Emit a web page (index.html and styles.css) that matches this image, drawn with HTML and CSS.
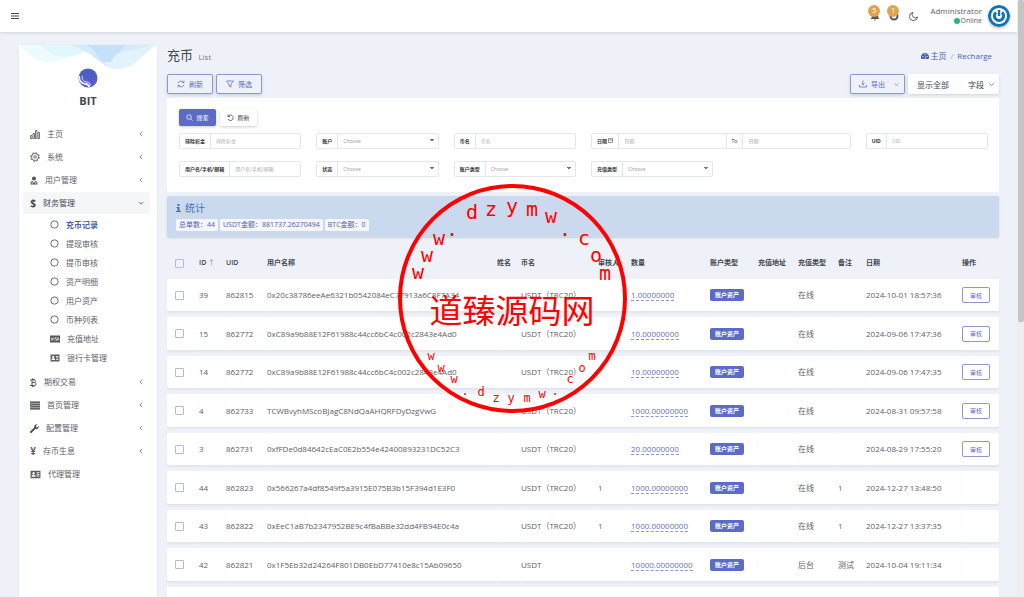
FILE: index.html
```html
<!DOCTYPE html>
<html lang="zh-CN">
<head>
  <meta charset="utf-8">
  <title>充币</title>
  <link rel="stylesheet" href="styles.css">
</head>
<body>
  <svg class="symbols" aria-hidden="true">
    <symbol id="i-circle" viewBox="0 0 16 16"><circle cx="8" cy="8" r="6.5" fill="none" stroke="currentColor" stroke-width="1.6"/></symbol>
    <symbol id="i-left" viewBox="0 0 16 16"><path d="M11 2L5 8l6 6" fill="none" stroke="currentColor" stroke-width="2"/></symbol>
    <symbol id="i-down" viewBox="0 0 16 16"><path d="M2 5l6 6 6-6" fill="none" stroke="currentColor" stroke-width="2"/></symbol>
    <symbol id="i-card" viewBox="0 0 20 16"><path fill="currentColor" fill-rule="evenodd" d="M1 1h18v14H1zM6.500 3.500a2.200 2.200 0 1 0 .01 0zM3 12h7c0-3-1.500-3.500-3.500-3.500S3 9 3 12zM12 4h5v1.500h-5zM12 7h5v1.500h-5zM12 10h5v1.500h-5z"/></symbol>
  </svg>

  <header class="topbar">
    <button class="icon-button" aria-label="Menu">
      <svg width="8" height="8" viewBox="0 0 8 8"><path d="M0 1.500h8M0 4h8M0 6.500h8" stroke="#444" stroke-width="1"/></svg>
    </button>
    <div class="topbar-right">
      <a class="notice" href="#">
        <svg width="10" height="10" viewBox="0 0 10 10"><path fill="#555" d="M5 0c2 0 3 2 3 4s.500 3 1.500 4h-9C1.500 7 2 6 2 4s1-4 3-4zM4 8.500h2L5 10z"/></svg>
        <span class="notice-count">5</span>
      </a>
      <a class="notice" href="#">
        <svg width="10" height="10" viewBox="0 0 10 10"><circle cx="5" cy="5" r="3.500" fill="none" stroke="#555" stroke-width="2"/></svg>
        <span class="notice-count">1</span>
      </a>
      <button class="icon-button" aria-label="Dark mode">
        <svg width="11" height="11" viewBox="0 0 24 24"><path d="M21 13A9 9 0 1 1 11 3a7 7 0 0 0 10 10z" fill="none" stroke="#555" stroke-width="2"/></svg>
      </button>
      <div class="user">
        <span class="user-name">Administrator</span>
        <span class="user-status"><i class="dot"></i>Online</span>
      </div>
      <svg class="avatar" width="22" height="22" viewBox="0 0 22 22">
        <circle cx="11" cy="11" r="11" fill="#1473b3"/>
        <circle cx="11" cy="11" r="8" fill="#fff"/>
        <path d="M8 7.300A4.600 4.600 0 1 0 14 7.300" fill="none" stroke="#1473b3" stroke-width="3"/>
        <path d="M11 5v6" stroke="#1473b3" stroke-width="2.400"/>
      </svg>
    </div>
  </header>

  <div class="layout">
    <aside class="sidebar">
      <div class="brand">
        <svg class="wave" viewBox="0 0 138 26" preserveAspectRatio="none">
          <path d="M0 0h68C58 8 45 17 30 17S10 9 0 0z" fill="#eefbfc"/>
          <path d="M20 0h60C68 6 56 13 44 12S28 5 20 0z" fill="#e2f7fb"/>
          <path d="M52 0h86C124 6 118 24 98 24 84 24 76 8 52 0z" fill="#d5ebfb"/>
          <path d="M68 0h38C100 6 95 18 87 20 80 14 76 4 68 0z" fill="#c5e0fa"/>
          <path d="M92 17C98 2 114 8 132 0h6C124 6 118 24 98 24 92 24 88 20 84 17z" fill="#e3f3fd"/>
        </svg>
        <svg class="logo" width="20" height="20" viewBox="0 0 20 20">
          <circle cx="10" cy="10" r="9.500" fill="#4e5fc0"/>
          <path d="M5 8c0 4 3 5 6 5 3 0 4 2 3 4 2-1 4-4 4-6-2 2-5 2-7 1S7 11 5 8z" fill="#6a50dc"/>
          <path d="M1 8c0 5 2 7 6 8 3 0 4 1 4 3" fill="none" stroke="#eceefb" stroke-width="1.800"/>
          <path d="M4 8c0 4 2 6 5 6 2 0 4 2 3 4" fill="none" stroke="#eceefb" stroke-width="1"/>
        </svg>
        <strong>BIT</strong>
      </div>
      <nav>
        <ul class="menu">
          <li><a href="#"><svg width="10" height="9" viewBox="0 0 10 9"><path d="M.500 5.500h1.500v3H.500zM3 3.500h1.500v5H3zM5.500.500H7v8H5.500zM8 2.500h1.500v6H8z" fill="none" stroke="#555" stroke-width=".8"/></svg><span>主页</span><svg class="arrow"><use href="#i-left"/></svg></a></li>
          <li><a href="#"><svg width="10" height="10" viewBox="0 0 20 20"><circle cx="10" cy="10" r="7" fill="none" stroke="#555" stroke-width="1.600"/><circle cx="10" cy="10" r="2.500" fill="none" stroke="#555" stroke-width="1.600"/><circle cx="10" cy="10" r="8.500" fill="none" stroke="#555" stroke-width="2" stroke-dasharray="3.300 3.370"/></svg><span>系统</span><svg class="arrow"><use href="#i-left"/></svg></a></li>
          <li><a href="#"><svg width="8" height="9" viewBox="0 0 16 18"><path fill="#555" fill-rule="evenodd" d="M8 1a4 4 0 0 1 4 4c0 2-1 4-4 4S4 7 4 5a4 4 0 0 1 4-4zM1 17c0-4 1-7 4-7l3 4 3-4c3 0 4 3 4 7zM3 13v2h3v-2zM10 13v2h3v-2z"/></svg><span>用户管理</span><svg class="arrow"><use href="#i-left"/></svg></a></li>
          <li class="open"><a href="#"><b class="glyph">$</b><span>财务管理</span><svg class="arrow"><use href="#i-down"/></svg></a>
            <ul class="submenu">
              <li><a class="active" href="#"><svg class="ring"><use href="#i-circle"/></svg><span>充币记录</span></a></li>
              <li><a href="#"><svg class="ring"><use href="#i-circle"/></svg><span>提现审核</span></a></li>
              <li><a href="#"><svg class="ring"><use href="#i-circle"/></svg><span>提币审核</span></a></li>
              <li><a href="#"><svg class="ring"><use href="#i-circle"/></svg><span>资产明细</span></a></li>
              <li><a href="#"><svg class="ring"><use href="#i-circle"/></svg><span>用户资产</span></a></li>
              <li><a href="#"><svg class="ring"><use href="#i-circle"/></svg><span>币种列表</span></a></li>
              <li><a href="#"><svg width="10" height="8" viewBox="0 0 20 16"><path fill="#555" d="M0 1h20v14H0z"/><path d="M2 5l2 6 2-6M8 5v6M13 5h-2v3h2v3h-2M14.500 11l1.500-6 2 6" fill="none" stroke="#fff" stroke-width="1.300"/></svg><span>充值地址</span></a></li>
              <li><a href="#"><svg width="10" height="8"><use href="#i-card"/></svg><span>银行卡管理</span></a></li>
            </ul>
          </li>
          <li><a href="#"><svg width="7" height="9" viewBox="0 0 14 18"><path d="M0 4h8c4 0 4 5 0 5H4h5c4 0 4 6 0 6H0M4 4v11M5 1v3M8 1v3M5 15v3M8 15v3" fill="none" stroke="#555" stroke-width="2"/></svg><span>期权交易</span><svg class="arrow"><use href="#i-left"/></svg></a></li>
          <li><a href="#"><svg width="10" height="9" viewBox="0 0 10 9"><path fill="#999" d="M0 0h10v9H0z"/><path d="M0 1.500h10M0 3.500h10M0 5.500h10M0 7.500h10" stroke="#666"/></svg><span>首页管理</span><svg class="arrow"><use href="#i-left"/></svg></a></li>
          <li><a href="#"><svg width="9" height="9" viewBox="0 0 18 18"><path d="M2 16l8-8" stroke="#555" stroke-width="4" stroke-linecap="round"/><path fill="#555" d="M15 1l-3 3v2l2 1 4-3c0 5-4 7-7 6S7 5 10 2s4-1 5-1z"/></svg><span>配置管理</span><svg class="arrow"><use href="#i-left"/></svg></a></li>
          <li><a href="#"><b class="glyph">¥</b><span>存币生息</span><svg class="arrow"><use href="#i-left"/></svg></a></li>
          <li><a href="#"><svg width="11" height="9"><use href="#i-card"/></svg><span>代理管理</span></a></li>
        </ul>
      </nav>
    </aside>

    <main>
      <div class="page-head">
        <h1>充币 <small>List</small></h1>
        <div class="breadcrumb">
          <a href="#"><svg width="8" height="8" viewBox="0 0 16 14"><path fill="#4c60b5" fill-rule="evenodd" d="M8 1a8 8 0 0 1 7 12H1A8 8 0 0 1 8 1zM7 3v2h2V3zM3 7v2h2V7zM11 7v2h2V7zM7 12h2l1-6z"/></svg>主页</a>
          <i>/</i>
          <a href="#">Recharge</a>
        </div>
      </div>

      <div class="toolbar">
        <button class="btn-outline"><svg width="8" height="8" viewBox="0 0 16 16"><path d="M2 7a6 6 0 0 1 11-2M14 9a6 6 0 0 1-11 2M14 1v4h-4M2 15v-4h4" fill="none" stroke="currentColor" stroke-width="1.500"/></svg>刷新</button>
        <button class="btn-outline"><svg width="8" height="8" viewBox="0 0 16 16"><path d="M1 2h14l-5 6v6l-4-2V8z" fill="none" stroke="currentColor" stroke-width="1.500"/></svg>筛选</button>
        <button class="btn-outline export"><svg width="8" height="8" viewBox="0 0 16 16"><path d="M8 1v9M5 7l3 3 3-3M1 10v4h14v-4" fill="none" stroke="currentColor" stroke-width="1.500"/></svg>导出<svg class="caret"><use href="#i-down"/></svg></button>
        <div class="btn-group">
          <button>显示全部</button>
          <button>字段<svg class="caret"><use href="#i-down"/></svg></button>
        </div>
      </div>

      <form class="filter">
        <div class="filter-buttons">
          <button type="button" class="btn-search"><svg width="7" height="7" viewBox="0 0 14 14"><circle cx="6" cy="6" r="4.500" fill="none" stroke="currentColor" stroke-width="1.500"/><path d="M9 9l4 4" stroke="currentColor" stroke-width="1.500"/></svg>搜索</button>
          <button type="reset" class="btn-white"><svg width="7" height="7" viewBox="0 0 14 14"><path d="M2 1v4h4M2 5a5.500 5.500 0 1 1 0 5" fill="none" stroke="currentColor" stroke-width="1.500"/></svg>刷新</button>
        </div>
        <div class="filter-grid">
          <div class="field"><label for="f-bonus">排除彩金</label><input id="f-bonus" type="text" placeholder="排除彩金"></div>
          <div class="field"><label for="f-account">账户</label><select id="f-account"><option>Choose</option></select></div>
          <div class="field"><label for="f-coin">币名</label><input id="f-coin" type="text" placeholder="币名"></div>
          <div class="field wide"><label for="f-from">日期 <svg width="5" height="5" viewBox="0 0 10 10"><path d="M1 1h8v8H1zM1 4h8" fill="none" stroke="currentColor"/></svg></label><input id="f-from" type="text" placeholder="日期"><label class="to" for="f-to">To</label><input id="f-to" type="text" placeholder="日期"></div>
          <div class="field"><label for="f-uid">UID</label><input id="f-uid" type="text" placeholder="UID"></div>
          <div class="field"><label for="f-user">用户名/手机/邮箱</label><input id="f-user" type="text" placeholder="用户名/手机/邮箱"></div>
          <div class="field"><label for="f-status">状态</label><select id="f-status"><option>Choose</option></select></div>
          <div class="field"><label for="f-type">账户类型</label><select id="f-type"><option>Choose</option></select></div>
          <div class="field"><label for="f-charge">充值类型</label><select id="f-charge"><option>Choose</option></select></div>
        </div>
      </form>

      <section class="stats">
        <h2><svg width="5" height="8" viewBox="0 0 5 8"><path fill="#3f6fc4" d="M1.500 0h2v2h-2zM.500 3h3v4H5v1H0V7h1.500V4h-1z"/></svg>统计</h2>
        <span class="stat">总单数：44</span>
        <span class="stat">USDT金额：881737.26270494</span>
        <span class="stat">BTC金额：0</span>
      </section>

      <table>
        <colgroup>
          <col class="c-check"><col class="c-id"><col class="c-uid"><col><col class="c-name"><col class="c-coin"><col class="c-auditor"><col class="c-amount"><col class="c-type"><col class="c-charge"><col class="c-charge"><col class="c-note"><col class="c-date"><col class="c-action">
        </colgroup>
        <thead>
          <tr>
            <th><input type="checkbox" aria-label="全选"></th>
            <th>ID <span class="sort">↑</span></th><th>UID</th><th>用户名称</th><th>姓名</th><th>币名</th><th>审核人</th><th>数量</th><th>账户类型</th><th>充值地址</th><th>充值类型</th><th>备注</th><th>日期</th><th>操作</th>
          </tr>
        </thead>
        <tbody>
          <tr><td><input type="checkbox" aria-label="39"></td><td>39</td><td>862815</td><td>0x20c38786eeAe6321b0542084eC77913a6C8F7A34</td><td></td><td>USDT（TRC20）</td><td></td><td><a href="#">1.00000000</a></td><td><span class="tag">账户资产</span></td><td></td><td>在线</td><td></td><td>2024-10-01 18:57:36</td><td><button class="audit">审核</button></td></tr>
          <tr><td><input type="checkbox" aria-label="15"></td><td>15</td><td>862772</td><td>0xC89a9b88E12F61988c44cc6bC4c002c2843e4Ad0</td><td></td><td>USDT（TRC20）</td><td></td><td><a href="#">10.00000000</a></td><td><span class="tag">账户资产</span></td><td></td><td>在线</td><td></td><td>2024-09-06 17:47:36</td><td><button class="audit">审核</button></td></tr>
          <tr><td><input type="checkbox" aria-label="14"></td><td>14</td><td>862772</td><td>0xC89a9b88E12F61988c44cc6bC4c002c2843e4Ad0</td><td></td><td>USDT（TRC20）</td><td></td><td><a href="#">10.00000000</a></td><td><span class="tag">账户资产</span></td><td></td><td>在线</td><td></td><td>2024-09-06 17:47:35</td><td><button class="audit">审核</button></td></tr>
          <tr><td><input type="checkbox" aria-label="4"></td><td>4</td><td>862733</td><td>TCWBvyhMScoBJagC8NdQaAHQRFDyDzgVwG</td><td></td><td>USDT（TRC20）</td><td></td><td><a href="#">1000.00000000</a></td><td><span class="tag">账户资产</span></td><td></td><td>在线</td><td></td><td>2024-08-31 09:57:58</td><td><button class="audit">审核</button></td></tr>
          <tr><td><input type="checkbox" aria-label="3"></td><td>3</td><td>862731</td><td>0xfFDe0d84642cEaC0E2b554e42400893231DC52C3</td><td></td><td>USDT（TRC20）</td><td></td><td><a href="#">20.00000000</a></td><td><span class="tag">账户资产</span></td><td></td><td>在线</td><td></td><td>2024-08-29 17:55:20</td><td><button class="audit">审核</button></td></tr>
          <tr><td><input type="checkbox" aria-label="44"></td><td>44</td><td>862823</td><td>0x566267a4df8549f5a3915E075B3b15F394d1E3F0</td><td></td><td>USDT（TRC20）</td><td>1</td><td><a href="#">1000.00000000</a></td><td><span class="tag">账户资产</span></td><td></td><td>在线</td><td>1</td><td>2024-12-27 13:48:50</td><td></td></tr>
          <tr><td><input type="checkbox" aria-label="43"></td><td>43</td><td>862822</td><td>0xEeC1aB7b2347952BE9c4fBaBBe32dd4FB94E0c4a</td><td></td><td>USDT（TRC20）</td><td>1</td><td><a href="#">1000.00000000</a></td><td><span class="tag">账户资产</span></td><td></td><td>在线</td><td>1</td><td>2024-12-27 13:37:35</td><td></td></tr>
          <tr><td><input type="checkbox" aria-label="42"></td><td>42</td><td>862821</td><td>0x1F5Eb32d24264F801DB0EbD77410e8c15Ab09650</td><td></td><td>USDT</td><td></td><td><a href="#">10000.00000000</a></td><td><span class="tag">账户资产</span></td><td></td><td>后台</td><td>测试</td><td>2024-10-04 19:11:34</td><td></td></tr>
          <tr><td colspan="14"></td></tr>
        </tbody>
      </table>
    </main>
  </div>

  <div class="scrollbar"><div class="thumb"></div></div>

  <svg class="stamp" width="230" height="230" viewBox="398 184 230 230">
    <circle cx="512.500" cy="298.500" r="112.500"/>
    <g class="stamp-large">
      <text x="418" y="279">w</text><text x="427" y="262">w</text><text x="439" y="245">w</text><text x="452" y="236">.</text><text x="472" y="219">d</text><text x="491" y="216">z</text><text x="512" y="213">y</text><text x="532" y="216">m</text><text x="551" y="223">w</text><text x="565" y="236">.</text><text x="584" y="245">c</text><text x="596" y="262">o</text><text x="605" y="280">m</text>
    </g>
    <text class="stamp-name" x="512" y="323">道臻源码网</text>
    <g class="stamp-small">
      <text x="431" y="360">w</text><text x="441" y="372">w</text><text x="454" y="383">w</text><text x="465" y="395">.</text><text x="481" y="396">d</text><text x="496" y="402">z</text><text x="511" y="402">y</text><text x="527" y="402">m</text><text x="542" y="398">w</text><text x="555" y="395">.</text><text x="570" y="383">c</text><text x="582" y="372">o</text><text x="592" y="360">m</text>
    </g>
  </svg>
</body>
</html>
```
FILE: styles.css
```css
* {
  box-sizing: border-box;
}

body {
  margin: 0;
  height: 100vh;
  overflow: hidden;
  background: #eef1f7;
  color: #5c6166;
  font-family: "Open Sans", "Noto Sans CJK SC", sans-serif;
  font-size: 8px;
  line-height: 12px;
}

a {
  color: inherit;
  text-decoration: none;
}

button, input, select {
  font-family: inherit;
  margin: 0;
}

button {
  padding: 0;
  border: 0;
  background: none;
  display: flex;
  align-items: center;
  justify-content: center;
}

ul {
  list-style: none;
  margin: 0;
  padding: 0;
}

.symbols {
  position: absolute;
  width: 0;
  height: 0;
}

/* top bar */
.topbar {
  height: 32px;
  padding: 0 14px 0 11px;
  display: flex;
  align-items: center;
  justify-content: space-between;
  background: #fff;
  box-shadow: 0 1px 3px rgba(0, 0, 0, 0.12);
}

.topbar-right {
  display: flex;
  align-items: center;
}

.notice {
  position: relative;
  width: 10px;
  height: 10px;
  margin-right: 9px;
}

.notice svg {
  display: block;
}

.notice-count {
  position: absolute;
  left: -2px;
  top: -6px;
  width: 12px;
  height: 12px;
  border-radius: 6px;
  background: #dda451;
  color: #fff;
  font-size: 7px;
  text-align: center;
}

.user {
  margin: 0 6px 0 11px;
  display: flex;
  flex-direction: column;
  align-items: flex-end;
  line-height: 10px;
}

.user-status {
  font-size: 7px;
  display: flex;
  align-items: center;
  gap: 1px;
}

.dot {
  width: 6px;
  height: 6px;
  border-radius: 3px;
  background: #21b978;
}

.avatar {
  border-radius: 11px;
  box-shadow: 0 1px 3px rgba(0, 0, 0, 0.3);
}

.layout {
  display: flex;
  align-items: flex-start;
  gap: 10px;
  padding: 0 25px 0 19px;
}

/* sidebar */
.sidebar {
  width: 138px;
  min-height: 100vh;
  margin-top: 13px;
  background: #fff;
  flex-shrink: 0;
  box-shadow: 0 0 2px rgba(0, 0, 0, 0.05);
}

.brand {
  position: relative;
  height: 78px;
  padding-top: 23px;
  display: flex;
  flex-direction: column;
  align-items: center;
  color: #414750;
  font-size: 11px;
  line-height: 25px;
}

.wave {
  position: absolute;
  top: 0;
  left: 0;
  width: 100%;
  height: 26px;
}

.logo {
  position: relative;
}

.menu > li {
  margin: 0 7px 1px 4px;
}

.menu > li > a {
  display: flex;
  align-items: center;
  height: 22px;
  padding: 0 6px 0 7px;
  border-radius: 2px;
}

.menu a span {
  margin-left: 7px;
}

.menu > .open > a {
  background: #f5f6f8;
  color: #414750;
}

.glyph {
  width: 6px;
  font-size: 10px;
  text-align: center;
}

.arrow {
  width: 6px;
  height: 6px;
  margin-left: auto;
}

.submenu {
  margin: 1px 0 4px;
}

.submenu a {
  display: flex;
  align-items: center;
  height: 19px;
  padding-left: 27px;
}

.submenu .active {
  color: #4c60b5;
  font-weight: bold;
}

.ring {
  width: 9px;
  height: 9px;
}

/* content */
main {
  flex: 1;
  min-width: 0;
}

.page-head {
  display: flex;
  align-items: center;
  justify-content: space-between;
  height: 42px;
  padding: 6px 7px 0 0;
}

h1 {
  margin: 0;
  color: #414750;
  font-size: 13px;
  font-weight: normal;
}

h1 small {
  margin-left: 2px;
  color: #777;
  font-size: 8px;
}

.breadcrumb {
  display: flex;
  gap: 4px;
  color: #4c60b5;
}

.breadcrumb a {
  display: flex;
  align-items: center;
  gap: 1px;
}

.breadcrumb i {
  color: #aaa;
}

.toolbar {
  display: flex;
  gap: 3px;
  height: 24px;
}

.btn-outline {
  height: 20px;
  padding: 0 9px;
  gap: 4px;
  border: 1px solid #8d98cf;
  border-radius: 2px;
  color: #5c6bc6;
  font-size: 7px;
  box-shadow: 0 1px 3px rgba(92, 107, 198, 0.3);
}

.export {
  margin-left: auto;
  padding: 0 5px 0 8px;
}

.caret {
  width: 5px;
  height: 5px;
  margin-left: 5px;
}

.btn-group {
  display: flex;
  height: 20px;
  padding: 0 5px 0 9px;
  gap: 19px;
  border-radius: 2px;
  background: #fff;
  box-shadow: 0 1px 3px rgba(0, 0, 0, 0.12);
}

.btn-group button {
  color: #414750;
  font-size: 8px;
}

/* filter */
.filter {
  padding: 11px 11px 15px 12px;
  border-radius: 2px;
  background: #fff;
}

.filter-buttons {
  display: flex;
  gap: 4px;
  margin-bottom: 7px;
}

.filter-buttons button {
  width: 37px;
  height: 17px;
  gap: 3px;
  border-radius: 2px;
  font-size: 6px;
  box-shadow: 0 1px 3px rgba(0, 0, 0, 0.2);
}

.filter-buttons .btn-search {
  background: #5c6bc6;
  color: #fff;
}

.filter-buttons .btn-white {
  background: #fff;
  color: #414750;
}

.filter-grid {
  display: grid;
  grid-template-columns: repeat(6, minmax(0, 1fr));
  gap: 12px 15px;
}

.field {
  display: flex;
  height: 16px;
  border: 1px solid #e2e8ea;
  border-radius: 2px;
  font-size: 5px;
  line-height: 14px;
}

.field.wide {
  grid-column: span 2;
}

.field label {
  padding: 0 5px;
  border-right: 1px solid #e2e8ea;
  color: #333;
  font-weight: bold;
  white-space: nowrap;
}

.field .to {
  border-left: 1px solid #e2e8ea;
  font-weight: normal;
}

.field input, .field select {
  flex: 1;
  min-width: 0;
  padding: 0 5px;
  border: 0;
  background: none;
  color: #999;
  font-size: 5px;
}

.field ::placeholder {
  color: #aaa;
}

.field select {
  appearance: none;
  background: linear-gradient(to bottom right, #777 50%, transparent 51%) right 4px top 5px / 2px 3px no-repeat,
    linear-gradient(to bottom left, #777 50%, transparent 51%) right 6px top 5px / 2px 3px no-repeat;
}

/* stats */
.stats {
  display: flex;
  flex-wrap: wrap;
  gap: 0 2px;
  height: 41px;
  margin-top: 4px;
  padding: 6px 9px;
  border-radius: 2px;
  background: #cbd9ee;
  box-shadow: 0 1px 2px rgba(0, 0, 0, 0.15);
}

.stats h2 {
  width: 100%;
  margin: 0 0 4px;
  display: flex;
  align-items: center;
  gap: 4px;
  color: #3f6fc4;
  font-size: 10px;
  font-weight: normal;
}

.stat {
  height: 12px;
  padding: 0 3px;
  border-radius: 2px;
  background: #f4f6fb;
  color: #5560ad;
  font-size: 7px;
}

/* table */
table {
  width: 100%;
  margin-top: 10px;
  table-layout: fixed;
  border-collapse: separate;
  border-spacing: 0 6px;
}

.c-check { width: 32px; }
.c-id { width: 27px; }
.c-uid { width: 41px; }
.c-name { width: 24px; }
.c-coin { width: 77px; }
.c-auditor { width: 33px; }
.c-amount { width: 79px; }
.c-type { width: 48px; }
.c-charge { width: 40px; }
.c-note { width: 28px; }
.c-date { width: 96px; }
.c-action { width: 37px; }

th, td {
  padding: 0;
  text-align: left;
  white-space: nowrap;
}

th {
  height: 20px;
  color: #414750;
  font-size: 7px;
  font-weight: 600;
}

.sort {
  color: #888;
  font-weight: normal;
}

td {
  height: 32px;
  background: #fff;
  box-shadow: 0 2px 2px rgba(0, 0, 0, 0.05);
}

tbody tr:nth-child(even) td {
  height: 33px;
}

th:first-child, td:first-child {
  padding-left: 8px;
  border-radius: 2px 0 0 2px;
}

td:last-child {
  border-radius: 0 2px 2px 0;
}

input[type="checkbox"] {
  appearance: none;
  display: block;
  width: 9px;
  height: 9px;
  border: 1px solid #b4bec8;
  border-radius: 1px;
}

td a {
  display: inline-block;
  border-bottom: 1px dashed #8d98cf;
  color: #6673b8;
  line-height: 10px;
}

.tag {
  display: inline-block;
  padding: 0 5px;
  border-radius: 2px;
  background: #5c6bc6;
  color: #fff;
  font-size: 6px;
  font-weight: bold;
  vertical-align: middle;
}

.audit {
  width: 28px;
  height: 16px;
  border: 1px solid #8d98cf;
  border-radius: 2px;
  color: #5c6bc6;
  font-size: 6px;
}

.scrollbar {
  position: fixed;
  top: 0;
  right: 0;
  bottom: 0;
  width: 7px;
  background: #eee;
}

.thumb {
  width: 6px;
  height: 54%;
  margin-left: 1px;
  border-radius: 2px;
  background: #c4c4c4;
}

/* stamp over the page */
.stamp {
  position: absolute;
  left: 398px;
  top: 184px;
  fill: #f00;
  font-family: "DejaVu Sans Mono", monospace;
  text-anchor: middle;
  pointer-events: none;
}

.stamp circle {
  fill: none;
  stroke: #f00;
  stroke-width: 4;
}

.stamp-large {
  font-size: 20px;
}

.stamp-small {
  font-size: 12px;
}

.stamp-name {
  font-family: "Noto Sans CJK SC", sans-serif;
  font-size: 33px;
}
```
